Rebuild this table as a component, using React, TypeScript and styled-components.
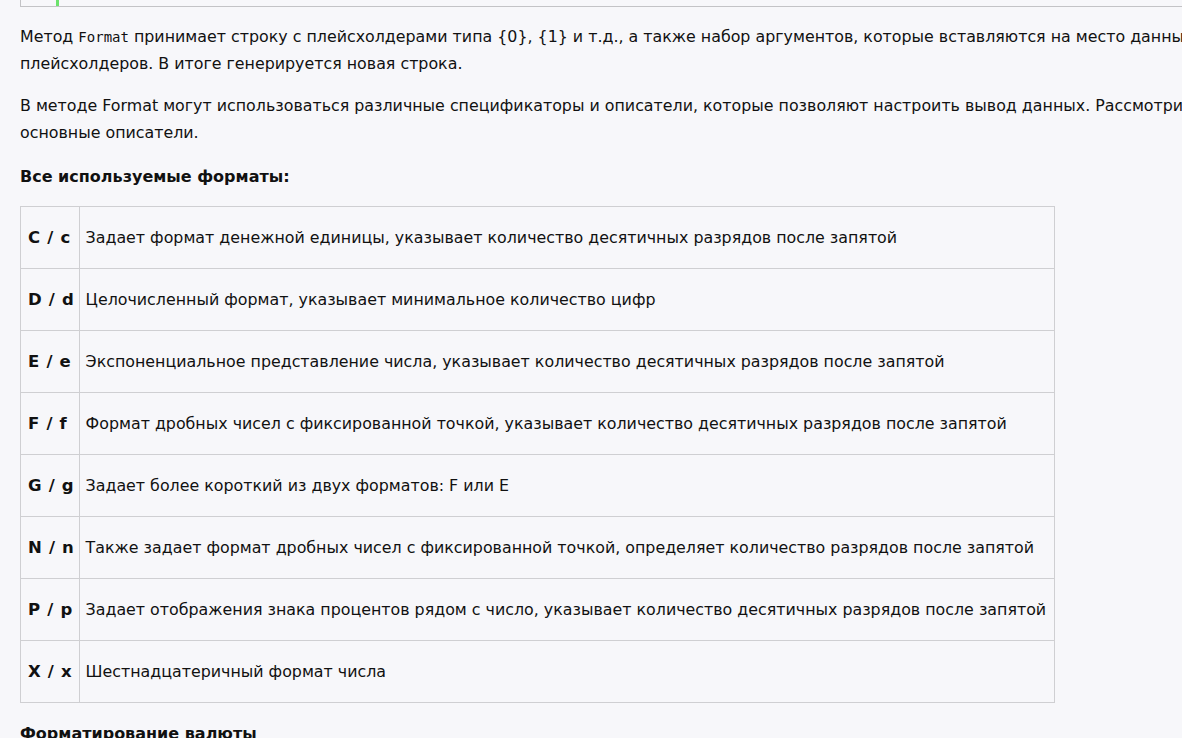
import React from "react";
import styled, { createGlobalStyle } from "styled-components";

const Global = createGlobalStyle`
  html, body { margin: 0; padding: 0; background: #f7f7fa; overflow: hidden; }
  body { font-family: "DejaVu Sans", Verdana, sans-serif; color: #111; }
`;

const Page = styled.div`
  width: 1190px;
  padding: 0 0 0 20px;
`;

const CodeBlock = styled.div`
  height: 6px;
  border: 1px solid #c3c3c6;
  border-top: none;
  margin-right: -40px;
  display: flex;
`;

const Gutter = styled.div`
  width: 35px;
  border-right: 3px solid #6ce26c;
`;

const P = styled.p`
  font-size: 15.85px;
  line-height: 26.5px;
  margin: 16px 0 0;
  &:first-of-type { margin-top: 17px; }
`;

const Code = styled.code`
  font-family: "DejaVu Sans Mono", monospace;
  font-size: 14px;
  line-height: 0;
`;

const H = styled.p`
  font-size: 16px;
  font-weight: bold;
  line-height: 26px;
  margin: 18px 0 0;
`;

const Table = styled.table`
  border-collapse: collapse;
  margin-top: 16px;
  width: 1035px;
`;

const Row = styled.tr`
  height: 62px;
`;

const KeyCell = styled.td`
  border: 1px solid #cfcfd2;
  padding: 0 4px 0 7px;
  font-size: 16.5px;
  letter-spacing: 0.7px;
  font-weight: bold;
  white-space: nowrap;
  width: 46px;
`;

const DescCell = styled.td`
  border: 1px solid #cfcfd2;
  padding: 0 4px 0 6px;
  font-size: 15.85px;
  white-space: nowrap;
`;

const rows: [string, string][] = [
  ["C / c", "Задает формат денежной единицы, указывает количество десятичных разрядов после запятой"],
  ["D / d", "Целочисленный формат, указывает минимальное количество цифр"],
  ["E / e", "Экспоненциальное представление числа, указывает количество десятичных разрядов после запятой"],
  ["F / f", "Формат дробных чисел с фиксированной точкой, указывает количество десятичных разрядов после запятой"],
  ["G / g", "Задает более короткий из двух форматов: F или E"],
  ["N / n", "Также задает формат дробных чисел с фиксированной точкой, определяет количество разрядов после запятой"],
  ["P / p", "Задает отображения знака процентов рядом с число, указывает количество десятичных разрядов после запятой"],
  ["X / x", "Шестнадцатеричный формат числа"],
];

export default function App() {
  return (
    <>
      <Global />
      <Page>
        <CodeBlock>
          <Gutter />
        </CodeBlock>
        <P>
          Метод <Code>Format</Code> принимает строку с плейсхолдерами типа {"{0}"}, {"{1}"} и т.д., а также набор аргументов, которые вставляются на место данных плейсхолдеров. В итоге генерируется новая строка.
        </P>
        <P>
          В методе Format могут использоваться различные спецификаторы и описатели, которые позволяют настроить вывод данных. Рассмотрим основные описатели.
        </P>
        <H>Все используемые форматы:</H>
        <Table>
          <tbody>
            {rows.map(([k, d]) => (
              <Row key={k}>
                <KeyCell>{k}</KeyCell>
                <DescCell>{d}</DescCell>
              </Row>
            ))}
          </tbody>
        </Table>
        <H>Форматирование валюты</H>
      </Page>
    </>
  );
}
